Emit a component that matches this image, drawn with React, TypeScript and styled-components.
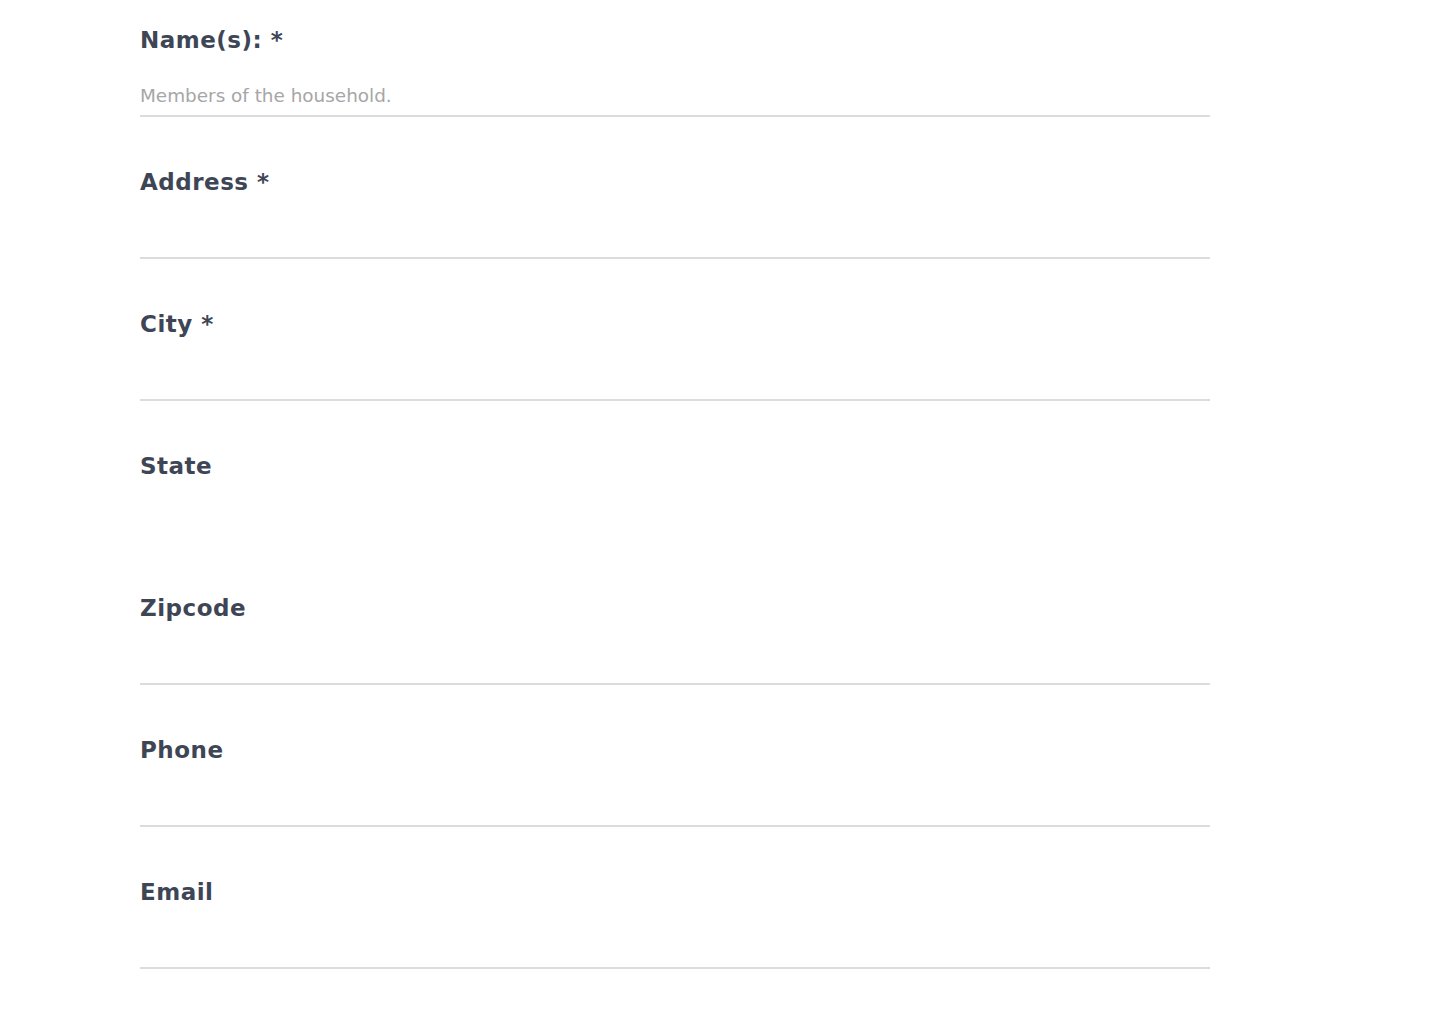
import React from "react";
import styled, { createGlobalStyle } from "styled-components";

const Global = createGlobalStyle`
  html, body { margin: 0; padding: 0; background: #ffffff; }
  body { font-family: "DejaVu Sans", Verdana, sans-serif; }
`;

const Form = styled.form`
  display: flex;
  flex-direction: column;
  width: 1070px;
  padding: 26px 0 0 140px;
  gap: 51px;
`;

const Field = styled.div`
  display: flex;
  flex-direction: column;
`;

const Label = styled.label`
  font-family: "DejaVu Sans", Verdana, sans-serif;
  font-weight: 700;
  font-size: 23px;
  letter-spacing: 0.5px;
  line-height: 28px;
  color: #3e4656;
`;

const Input = styled.input<{ $lined: boolean }>`
  display: block;
  box-sizing: content-box;
  margin-top: 21px;
  height: 40px;
  padding: 0;
  width: 100%;
  border: none;
  border-bottom: 2px solid ${(p) => (p.$lined ? "#dcdcdc" : "transparent")};
  outline: none;
  background: transparent;
  font-family: "DejaVu Sans", Verdana, sans-serif;
  font-size: 18.4px;
  color: #3e4656;
  &::placeholder {
    color: #a6a6a6;
    font-weight: 400;
  }
`;

const fields = [
  { label: "Name(s): *", placeholder: "Members of the household.", lined: true },
  { label: "Address *", placeholder: "", lined: true },
  { label: "City *", placeholder: "", lined: true },
  { label: "State", placeholder: "", lined: false },
  { label: "Zipcode", placeholder: "", lined: true },
  { label: "Phone", placeholder: "", lined: true },
  { label: "Email", placeholder: "", lined: true },
];

export default function App() {
  return (
    <>
      <Global />
      <Form onSubmit={(e) => e.preventDefault()}>
        {fields.map((f) => (
          <Field key={f.label}>
            <Label>{f.label}</Label>
            <Input $lined={f.lined} placeholder={f.placeholder} />
          </Field>
        ))}
      </Form>
    </>
  );
}
